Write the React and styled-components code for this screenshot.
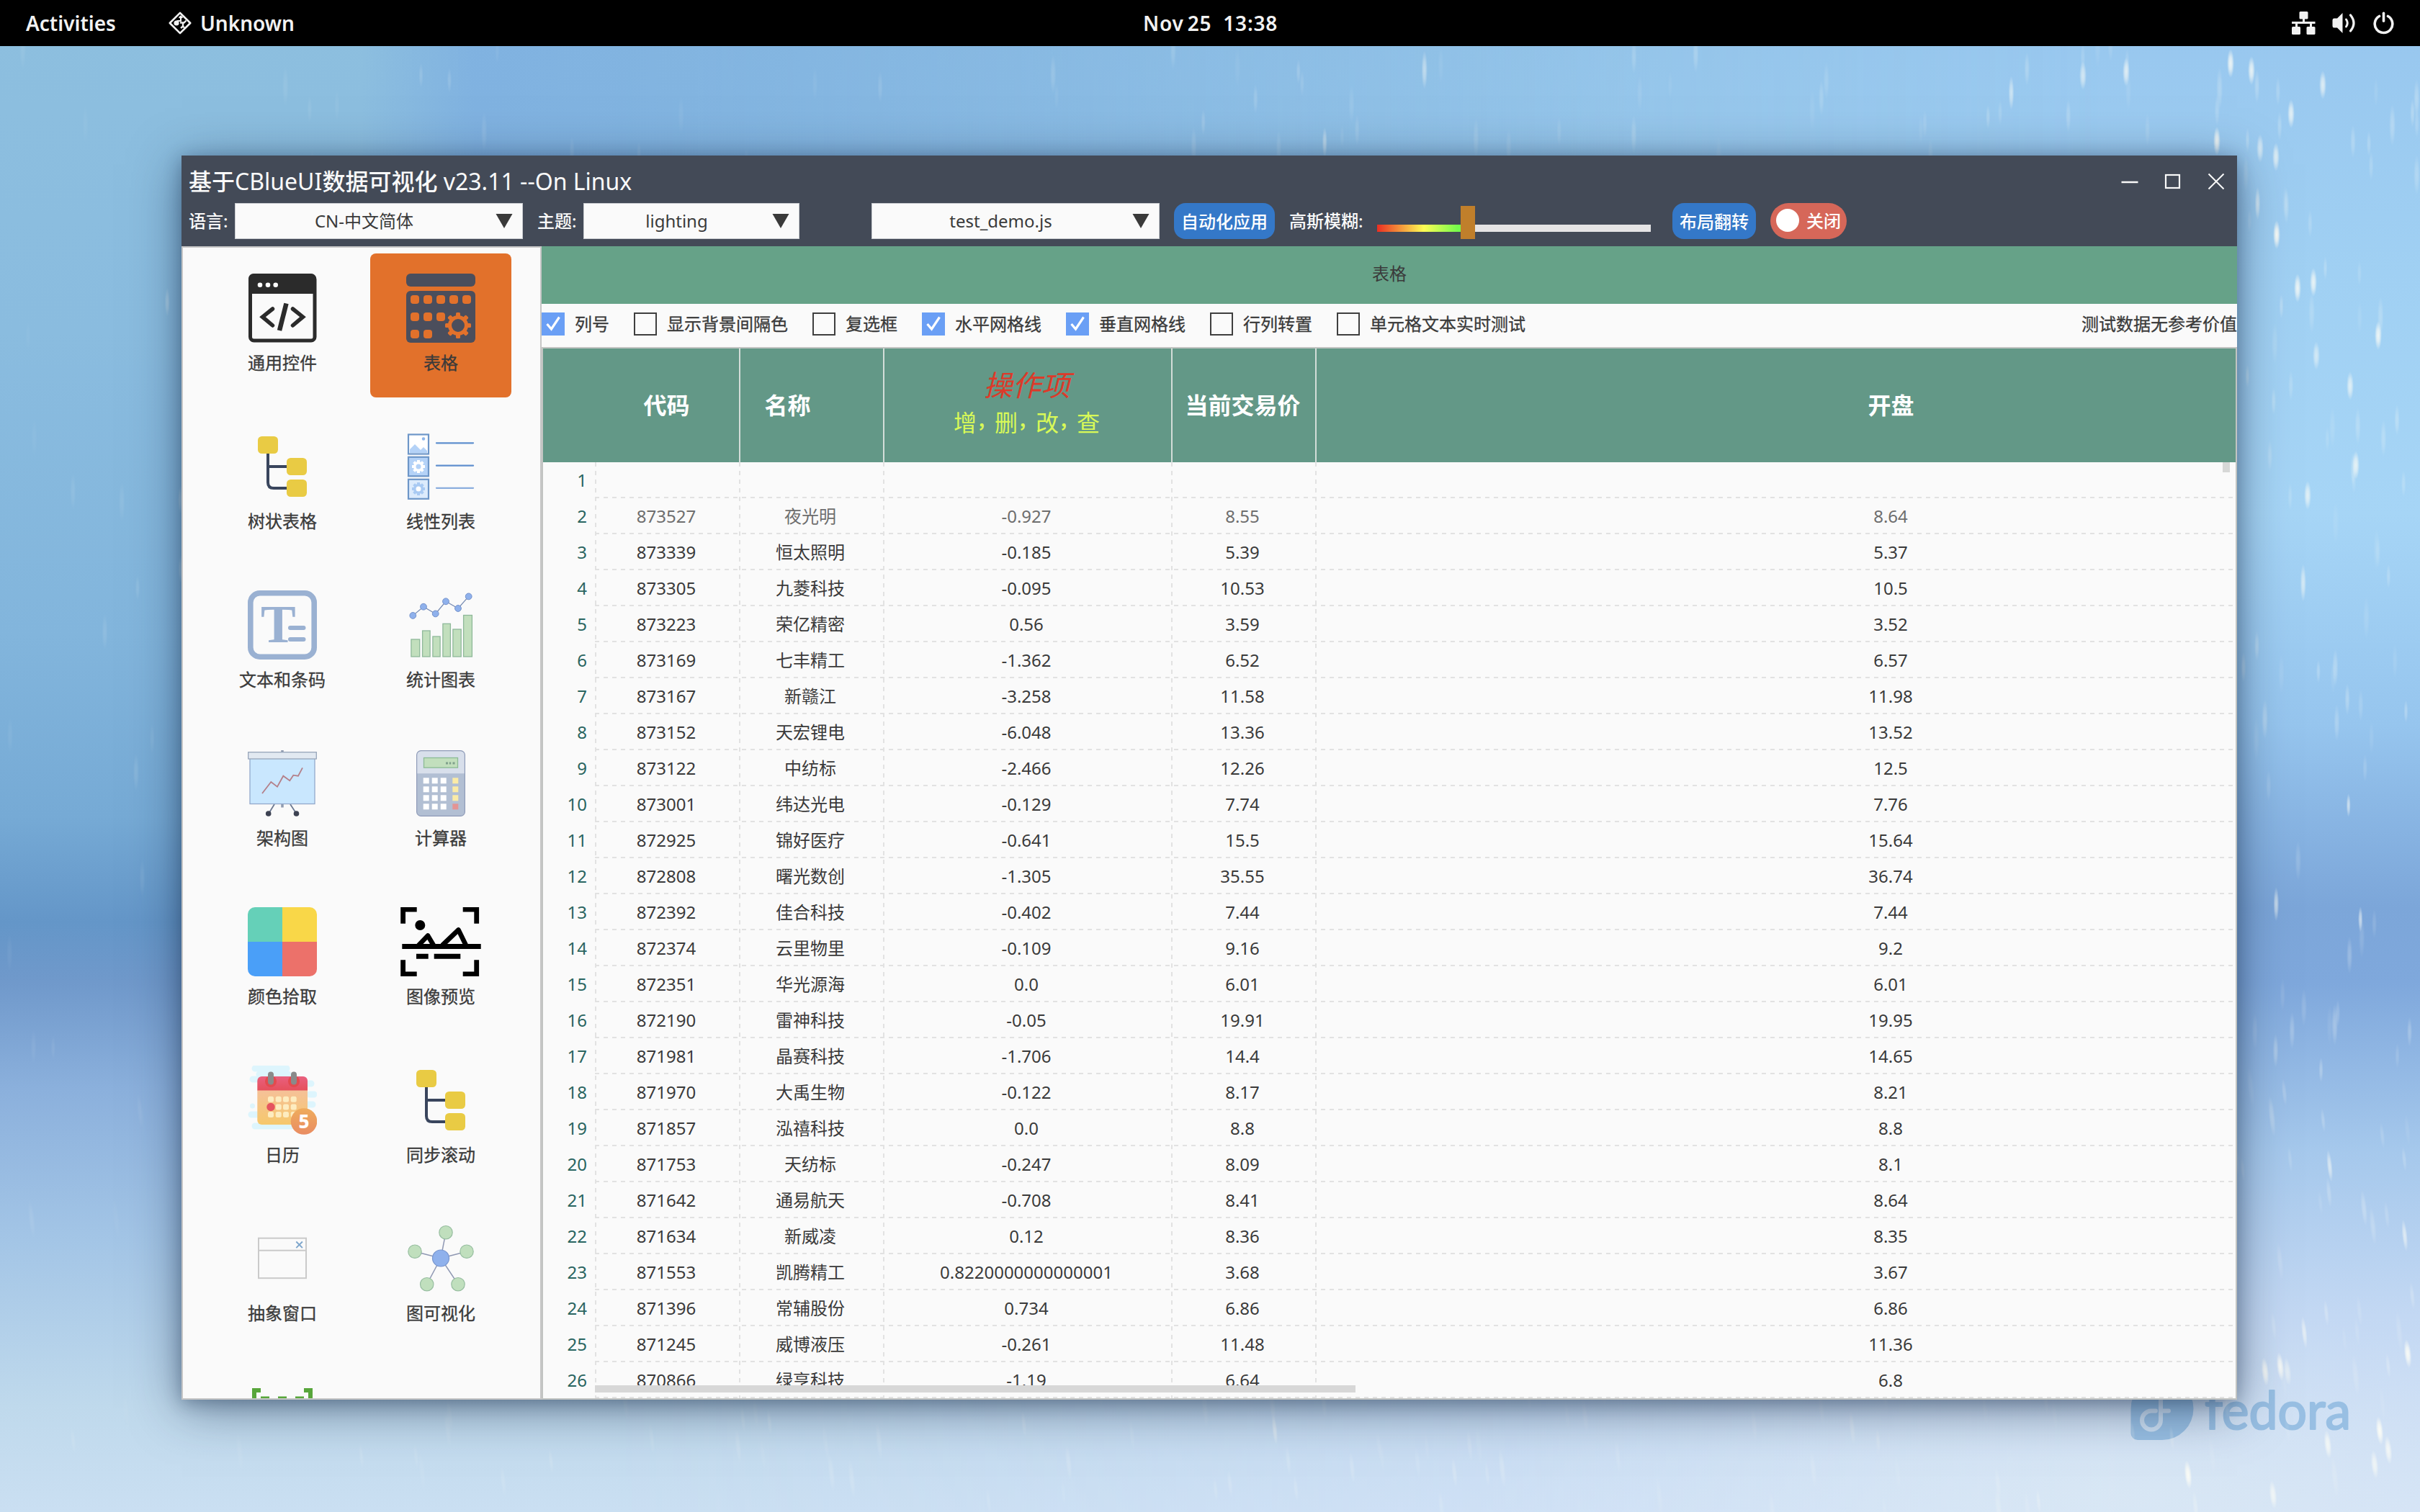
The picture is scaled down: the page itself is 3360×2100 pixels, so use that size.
import React from 'react';
import styled, { createGlobalStyle, css } from 'styled-components';

const GlobalStyle = createGlobalStyle`
  * { box-sizing: border-box; }
  html, body { margin: 0; padding: 0; }
  body {
    width: 3360px;
    height: 2100px;
    overflow: hidden;
    font-family: "Noto Sans", "Noto Sans CJK SC", sans-serif;
    font-size: 24px;
    color: #3a3a3a;
  }
  svg { display: block; }
`;

/* ---------- desktop ---------- */

const Desktop = styled.div`
  position: relative;
  width: 3360px;
  height: 2100px;
  overflow: hidden;
  background: linear-gradient(
    to bottom,
    #8dbfdf 0%, #8abcdf 22%, #82b5dc 42%, #76aad5 54%, #6496c8 61%,
    #7099cb 65%, #8bb0dc 72%, #a3c5e6 82%, #bfd9ec 93%, #cadff2 100%
  );
`;

const WallpaperRight = styled.div`
  position: absolute;
  inset: 0;
  background: linear-gradient(
    to bottom,
    #97c6ee 0%, #a0d0f3 18%, #a6d5f6 34%, #96c5ee 48%, #7ca6d9 60%,
    #7fa8dc 65%, #a5c8ec 76%, #c3d8f3 87%, #d2e1f7 100%
  );
  mask-image: linear-gradient(to right, transparent 25%, #000 88%);
`;

const WallpaperGlow = styled.div`
  position: absolute;
  inset: 0;
  background:
    linear-gradient(to right, transparent 500px, rgba(124, 174, 225, 0.75) 660px, transparent 2300px) 0 0 / 100% 640px no-repeat,
    radial-gradient(ellipse 900px 260px at 2950px 2080px, rgba(221, 235, 243, 0.6), transparent);
`;

const SnowLayer = styled.svg`
  position: absolute;
  inset: 0;
`;

const FedoraMark = styled.svg`
  position: absolute;
  left: 2958px;
  top: 1912px;
`;

const TopBar = styled.header`
  position: relative;
  display: grid;
  grid-template-columns: 1fr auto 1fr;
  align-items: center;
  height: 64px;
  padding: 0 36px;
  background: #000;
  color: #f2f2f2;
  font-size: 28px;
  font-weight: 600;
  line-height: 61px;
`;

const TopBarLeft = styled.div`
  display: flex;
  align-items: center;
`;

const AppMenu = styled.div`
  display: flex;
  align-items: center;
  gap: 12px;
  margin-left: 73px;
`;

const TopBarRight = styled.div`
  display: flex;
  align-items: center;
  justify-content: flex-end;
  gap: 23px;
`;

const Clock = styled.div`
  display: flex;
  gap: 16px;
  padding-left: 1px;
  letter-spacing: 0.8px;
  word-spacing: -3px;
`;

/* ---------- window ---------- */

const Window = styled.main`
  position: absolute;
  left: 252px;
  top: 216px;
  width: 2854px;
  height: 1728px;
  display: flex;
  flex-direction: column;
  background: #fafafa;
  box-shadow: 0 12px 64px rgba(20, 40, 70, 0.5), 0 4px 22px rgba(20, 40, 70, 0.32);
`;

const WindowHeader = styled.div`
  flex: none;
  height: 126px;
  background: #434a57;
  color: #fafafa;
`;

const TitleRow = styled.div`
  display: flex;
  align-items: center;
  justify-content: space-between;
  height: 66px;
  padding: 6px 17px 0 10px;
  font-size: 32px;
  line-height: 60px;
`;

const Hanzi = styled.span`
  font-weight: 500;
`;

const WindowButtons = styled.div`
  display: flex;
  gap: 36px;
`;

const ToolRow = styled.div`
  display: flex;
  align-items: center;
  height: 50px;
  padding-left: 10px;
  line-height: 48px;
`;

const ToolLabel = styled.span`
  flex: none;
  width: ${(p) => p.$width}px;
  font-weight: 500;
  white-space: nowrap;
`;

const SelectBox = styled.div`
  display: grid;
  grid-template-columns: 1fr 37px;
  align-items: center;
  width: ${(p) => p.$width}px;
  height: 50px;
  margin-right: ${(p) => p.$after}px;
  border: 1px solid #c9ccd0;
  background: #fafafa;
  color: #3a3a3a;
  text-align: center;
  line-height: 46px;
`;

const SelectValue = styled.span`
  padding-right: 4px;
`;

const PillButton = styled.button`
  width: ${(p) => p.$width}px;
  height: 50px;
  margin: 0 20px 0 0;
  padding: 0;
  border: 0;
  border-radius: 16px;
  background: #3478c8;
  color: #fff;
  font: inherit;
  font-weight: 500;
  line-height: 47px;
`;

const SliderTrack = styled.div`
  display: flex;
  align-items: flex-end;
  width: 380px;
  height: 50px;
  margin-right: 30px;
`;

const SliderFill = styled.div`
  width: 116px;
  height: 10px;
  margin-bottom: 10px;
  background: linear-gradient(to right, #ea2e22, #fdfd54 56%, #76fa4c 96%);
`;

const SliderThumb = styled.div`
  width: 20px;
  height: 46px;
  background: #c07f2b;
`;

const SliderRest = styled.div`
  flex: 1;
  height: 10px;
  margin-bottom: 10px;
  background: #e5e4e5;
`;

const Toggle = styled.div`
  display: flex;
  align-items: flex-start;
  gap: 10px;
  width: 106px;
  height: 50px;
  padding: 8px;
  border-radius: 25px;
  background: #d66759;
  color: #fff;
  font-weight: 500;
  line-height: 34px;
`;

const ToggleKnob = styled.div`
  width: 32px;
  height: 32px;
  border-radius: 50%;
  background: #fff;
`;

const WindowBody = styled.div`
  flex: 1;
  display: flex;
  min-height: 0;
`;

/* ---------- side bar ---------- */

const Sidebar = styled.nav`
  flex: none;
  display: grid;
  grid-template-columns: 196px 196px;
  grid-auto-rows: 200px;
  gap: 20px 24px;
  width: 500px;
  padding: 8px 0 0 40px;
  border: 2px solid #c6c6c6;
  overflow: hidden;
  background: #fafafa;
  -webkit-text-stroke: 0.3px currentColor;
`;

const SideItem = styled.div`
  display: flex;
  flex-direction: column;
  align-items: center;
  padding-top: 28px;
  border-radius: 8px;
  background: ${(p) => (p.$active ? '#e2712b' : 'transparent')};
  line-height: 36px;
  white-space: nowrap;
`;

const SideLabel = styled.span`
  margin-top: 10px;
`;

/* ---------- content ---------- */

const Content = styled.section`
  flex: 1;
  display: flex;
  flex-direction: column;
  min-width: 0;
`;

const Banner = styled.div`
  flex: none;
  height: 80px;
  background: #66a288;
  text-align: center;
  line-height: 76px;
`;

const OptionBar = styled.div`
  flex: none;
  display: flex;
  align-items: center;
  height: 60px;
  padding-bottom: 4px;
  line-height: 56px;
  white-space: nowrap;
  -webkit-text-stroke: 0.3px currentColor;
`;

const Option = styled.label`
  display: flex;
  align-items: center;
  gap: 14px;
  margin-right: 34px;
`;

const CheckMark = styled.span`
  width: 32px;
  height: 32px;
  border: 2px solid ${(p) => (p.$on ? '#6a9ff5' : '#3f3f3f')};
  background: ${(p) => (p.$on ? '#6a9ff5' : 'transparent')};
`;

const OptionNote = styled.span`
  margin-left: auto;
`;

const TablePanel = styled.div`
  flex: 1;
  position: relative;
  display: flex;
  flex-direction: column;
  min-height: 0;
  overflow: hidden;
  border: 2px solid #c2c4c2;
  background: #fafafa;
`;

const columns = css`
  display: grid;
  grid-template-columns: 72px 200px 200px 400px 200px 1600px;
`;

const HeadRow = styled.div`
  ${columns}
  flex: none;
  width: 2672px;
  height: 158px;
  background: #639887;
  color: #fff;
  font-size: 32px;
  font-weight: 700;
`;

const HeadCell = styled.div`
  display: flex;
  flex-direction: column;
  align-items: center;
  justify-content: center;
  padding-right: ${(p) => (p.$trail || 0) + (p.$line ? 3 : 1)}px;
  padding-bottom: 5px;
  border-left: ${(p) => (p.$line ? '2px solid #d3ddd8' : '0')};
`;

const HeadAccent = styled.span`
  color: #dc3a2a;
  font-size: 40px;
  font-style: italic;
  font-weight: 400;
  line-height: 52px;
`;

const HeadActions = styled.span`
  display: flex;
  color: #d8f957;
  font-weight: 400;
  line-height: 52px;
`;

const Comma = styled.span`
  width: 25px;
  font-size: 25px;
  font-weight: 700;
  line-height: 46px;
`;

const dashedRight = (color) => `repeating-linear-gradient(to right, ${color} 0 6px, transparent 6px 12px)`;
const dashedDown = `repeating-linear-gradient(to bottom, #e2e2e2 0 6px, transparent 6px 12px)`;

const BodyRows = styled.div`
  flex: none;
  width: 2672px;
  background-image: ${Array(5).fill(dashedDown).join(', ')};
  background-size: 2px 100%;
  background-repeat: no-repeat;
  background-position: 72px 0, 272px 0, 472px 0, 872px 0, 1072px 0;
`;

const Row = styled.div`
  ${columns}
  height: 50px;
  line-height: 50px;
  text-align: center;
  color: ${(p) => (p.$dim ? '#6e6e6e' : '#3a3a3a')};
  background: ${dashedRight('#e2e2e2')} 72px 48px / 100% 2px no-repeat;
`;

const IndexCell = styled.div`
  padding-right: 11px;
  text-align: right;
  color: #2a6560;
`;

const Cell = styled.div`
  padding-right: 2px;
  white-space: nowrap;
`;

const VScroll = styled.div`
  position: absolute;
  right: 8px;
  top: 158px;
  width: 10px;
  height: 14px;
  background: #d7d8d7;
`;

const HScroll = styled.div`
  position: absolute;
  left: 72px;
  bottom: 8px;
  width: 1056px;
  height: 10px;
  background: #d7d7d7;
`;

/* ---------- wallpaper snow ---------- */

function makeFlakes() {
  let seed = 20231125;
  const rand = () => {
    seed = (seed * 1664525 + 1013904223) % 4294967296;
    return seed / 4294967296;
  };
  const flakes = [];
  for (let i = 0; i < 1500; i += 1) {
    const x = rand() * 3360;
    const y = 60 + rand() * 2040;
    const keep = rand() < 0.25 + 0.75 * (x / 3360);
    const bright = rand();
    const size = rand();
    if (keep) {
      flakes.push({
        x,
        y,
        rx: 3 + size * 1.6,
        ry: 16 + size * 14,
        o: (bright > 0.93 ? 0.6 : 0.08 + bright * 0.22) * (0.4 + 0.6 * (x / 3360)),
      });
    }
  }
  const marked = [
    [2892, 105, 0.6], [2952, 100, 0.7], [3097, 88, 0.85], [3126, 98, 0.8], [3225, 118, 0.7], [3181, 158, 0.75],
    [3078, 196, 0.9], [3138, 206, 0.6], [3160, 218, 0.7], [3161, 326, 1], [3190, 400, 0.85], [3212, 392, 0.8],
    [3302, 466, 0.85], [3263, 536, 0.7], [3271, 646, 0.75], [3216, 494, 0.55], [3204, 688, 0.7], [3145, 1905, 0.85],
    [3166, 1898, 0.9], [3343, 1880, 0.95], [3316, 2014, 0.8], [3304, 1987, 1], [3038, 2048, 1], [3232, 2006, 0.8],
    [3297, 2034, 0.7], [3156, 2076, 0.7], [3176, 1905, 0.5],
  ];
  marked.forEach(([x, y, o]) => flakes.push({ x, y, rx: 5, ry: 20, o }));
  return flakes;
}

const flakes = makeFlakes();

const Snow = () => (
  <SnowLayer width="3360" height="2100" viewBox="0 0 3360 2100">
    <defs>
      <radialGradient id="flake">
        <stop offset="0" stopColor="#fbfcf6" />
        <stop offset="0.45" stopColor="#fbfcf6" stopOpacity="0.75" />
        <stop offset="1" stopColor="#fbfcf6" stopOpacity="0" />
      </radialGradient>
    </defs>
    {flakes.map((f, i) => (
      <ellipse
        key={i}
        cx={f.x}
        cy={f.y}
        rx={f.rx}
        ry={f.ry}
        fill="url(#flake)"
        opacity={f.o}
        transform={`rotate(${f.y > 1500 ? -6 : 0} ${f.x} ${f.y})`}
      />
    ))}
  </SnowLayer>
);

const Fedora = () => (
  <FedoraMark width="320" height="100" viewBox="0 0 320 100">
    <path d="M44 1a43.500 43.500 0 0 1 0 87H10a9.500 9.500 0 0 1-9.500-9.500V44.500A43.500 43.500 0 0 1 44 1z" fill="#98bfe3" />
    <path
      d="M35 47.500H29a13 13 0 1 0 13 13V32a12 12 0 0 1 12-12h7M42 47.500h11"
      fill="none"
      stroke="#ccdff2"
      strokeWidth="6"
      strokeLinecap="round"
    />
    <text
      x="103"
      y="73"
      fill="#98bfe3"
      stroke="#98bfe3"
      strokeWidth="2.200"
      strokeLinejoin="round"
      fontFamily="Lato, sans-serif"
      fontSize="73"
      textLength="203"
      lengthAdjust="spacingAndGlyphs"
    >
      fedora
    </text>
  </FedoraMark>
);

/* ---------- icons ---------- */

const Icon = ({ width = 96, children }) => (
  <svg width={width} height="96" viewBox={`0 0 ${width} 96`} fill="none">
    {children}
  </svg>
);

const CodeIcon = () => (
  <Icon>
    <rect x="3.500" y="3" width="89.500" height="90" rx="5" stroke="#2b2b2b" strokeWidth="5" />
    <path d="M1 28V7a7 7 0 0 1 7-7h80a7 7 0 0 1 7 7v21z" fill="#2b2b2b" />
    <circle cx="17" cy="15.700" r="3.300" fill="#fff" />
    <circle cx="28" cy="15.700" r="3.300" fill="#fff" />
    <circle cx="38.700" cy="15.700" r="3.300" fill="#fff" />
    <path d="M34.500 49 20.500 60.200 34.500 72M62.500 49l14 11.200L62.500 72" stroke="#2b2b2b" strokeWidth="5.500" strokeLinecap="round" />
    <path d="M53.500 41.500 44 79" stroke="#2b2b2b" strokeWidth="6.500" />
  </Icon>
);

const gridDots = [
  [6, 30], [24, 30], [42, 30], [60, 30], [78, 30],
  [6, 54], [24, 54], [42, 54],
  [6, 78], [24, 78],
];

const TableIcon = () => (
  <Icon>
    <rect width="96" height="18" rx="6" fill="#4b4e5c" />
    <rect y="24" width="96" height="72" rx="6" fill="#4b4e5c" />
    {gridDots.map(([x, y]) => (
      <rect key={`${x}-${y}`} x={x} y={y} width="12" height="12" rx="4" fill="#e2712b" />
    ))}
    <circle cx="72" cy="72" r="11.500" stroke="#e2712b" strokeWidth="5" />
    {[0, 45, 90, 135, 180, 225, 270, 315].map((a) => (
      <rect key={a} x="69" y="54" width="6" height="7" rx="1.500" fill="#e2712b" transform={`rotate(${a} 72 72)`} />
    ))}
  </Icon>
);

const TreeIcon = () => (
  <Icon>
    <path d="M28 28v42q0 8 8 8h20M28 48h28" stroke="#39455d" strokeWidth="4" />
    <rect x="14" y="6" width="28" height="24" rx="5.500" fill="#e9cb44" />
    <rect x="54" y="36" width="28" height="24" rx="5.500" fill="#e9cb44" />
    <rect x="54" y="66" width="28" height="24" rx="5.500" fill="#e9cb44" />
  </Icon>
);

const Petals = ({ cx, cy, fill }) => (
  <g fill={fill}>
    {[0, 45, 90, 135, 180, 225, 270, 315].map((a) => (
      <rect key={a} x={cx - 2} y={cy - 9} width="4" height="5" transform={`rotate(${a} ${cx} ${cy})`} />
    ))}
    <circle cx={cx} cy={cy} r="7" />
  </g>
);

const ListIcon = () => (
  <Icon>
    <rect x="3" y="3.500" width="28" height="27" fill="#fff" stroke="#6d96c8" strokeWidth="2.200" />
    <path d="M5 29v-5l7-7 8 8 4-4 5 5v3z" fill="#b4d2f7" />
    <circle cx="24" cy="9.500" r="2.200" fill="#8eb6ea" />
    <rect x="3" y="34.800" width="28" height="26.500" fill="#b4d2f7" stroke="#6d96c8" strokeWidth="2.200" />
    <Petals cx={17} cy={48} fill="#fff" />
    <circle cx="17" cy="48" r="3.500" fill="#b4d2f7" />
    <rect x="3" y="65.800" width="28" height="27" fill="#dcebfc" stroke="#6d96c8" strokeWidth="2.200" />
    <Petals cx={17} cy={79} fill="#a9caf3" />
    <circle cx="17" cy="79" r="3.500" fill="#fff" />
    <path d="M42 15.300h51M42 46.700h51" stroke="#5f8fce" strokeWidth="2.300" strokeLinecap="round" />
    <path d="M42 77.800h51" stroke="#8aadde" strokeWidth="2.300" strokeLinecap="round" />
  </Icon>
);

const TextIcon = () => (
  <Icon>
    <rect x="3.800" y="3.800" width="88.400" height="88.400" rx="13" stroke="#9ab1d2" strokeWidth="7.600" />
    <text x="18" y="72" fill="#9ab1d2" fontFamily="'Liberation Serif', serif" fontWeight="700" fontSize="73">T</text>
    <path d="M59 52h18.500M59 68h18.500" stroke="#9ab1d2" strokeWidth="6" strokeLinecap="round" />
  </Icon>
);

const chartPoints = [[9.3, 34.9], [24, 22.7], [40.7, 32.4], [55, 15.3], [72, 25], [86.7, 8.4]];
const chartBars = [[6.3, 13, 68], [22, 11.7, 56], [36.3, 11.4, 64], [50.3, 11.7, 46.3], [64.3, 12.5, 54], [79, 13, 34.5]];

const ChartIcon = () => (
  <Icon>
    {chartBars.map(([x, w, y]) => (
      <rect key={x} x={x + 0.6} y={y} width={w - 1.2} height={92 - y} fill="#c2dfbd" stroke="#8fb99a" strokeWidth="1.300" />
    ))}
    <polyline points={chartPoints.map((p) => p.join(',')).join(' ')} stroke="#7388b0" strokeWidth="1.200" />
    {chartPoints.map(([x, y]) => (
      <circle key={x} cx={x} cy={y} r="4.400" fill="#8fb1ec" stroke="#7391cb" strokeWidth="1" />
    ))}
  </Icon>
);

const BoardIcon = () => (
  <Icon>
    <path d="M48 2v4M48 77v4.500" stroke="#8f9bb0" strokeWidth="3.500" />
    <path d="M37 77 29 90M59 77l8.500 13" stroke="#6d7a92" strokeWidth="1.800" />
    <rect x="3" y="12" width="90" height="64.500" fill="#c9e7fe" stroke="#93a9cb" strokeWidth="1.300" />
    <rect x="0.700" y="4.700" width="94.600" height="9.300" fill="#e2e9f1" stroke="#97a5b9" strokeWidth="1.300" />
    <polyline points="20,62 32.300,46 41,52.700 49.300,37.700 58.300,44.300 63.300,36.700 70,37.700 76,26.300" stroke="#b4808a" strokeWidth="1.800" />
    <circle cx="28.700" cy="90" r="3.800" fill="#3d4252" />
    <circle cx="67.500" cy="90" r="3.800" fill="#3d4252" />
  </Icon>
);

const CalcIcon = () => (
  <Icon>
    <rect x="14.600" y="2.600" width="66.800" height="90.800" rx="6" fill="#b2bfd3" />
    <path d="M14.600 34.300V8.600a6 6 0 0 1 6-6h54.800a6 6 0 0 1 6 6v25.700z" fill="#d8dfeb" />
    <rect x="14.600" y="2.600" width="66.800" height="90.800" rx="6" stroke="#8f9bb8" strokeWidth="1.200" />
    <rect x="24.500" y="12.500" width="47" height="13.700" fill="#c2dfbd" stroke="#8cbb96" strokeWidth="1.300" />
    <path d="M55 20h3M59.800 20h2.400M64.500 20h3" stroke="#7fa08c" strokeWidth="3" />
    {[40.3, 52.3, 64.3, 76.3].map((y, i) => (
      <g key={y} fill="#fff">
        <rect x="23.700" y={y} width="8" height="8" />
        <rect x="35.700" y={y} width="8" height="8" />
        <rect x="47.700" y={y} width="8" height="8" />
        <rect x="64.300" y={y} width="8" height="8" fill={i === 3 ? '#e39494' : '#fbeba6'} />
      </g>
    ))}
  </Icon>
);

const ColorIcon = () => (
  <Icon>
    <path d="M0 48V10A10 10 0 0 1 10 0h38v48z" fill="#65d0b8" />
    <path d="M48 0h38a10 10 0 0 1 10 10v38H48z" fill="#f9d748" />
    <path d="M0 48h48v48H10A10 10 0 0 1 0 86z" fill="#4a9ff8" />
    <path d="M48 48h48v38a10 10 0 0 1-10 10H48z" fill="#ec716a" />
  </Icon>
);

const ScanIcon = () => (
  <Icon width={112}>
    <path
      d="M3.600 22.700V3.200H22.700M86.700 3.200h19v19.500M3.600 73.300v19.500H22.700M86.700 92.800h19V73.300"
      stroke="#000"
      strokeWidth="6.800"
    />
    <circle cx="27.300" cy="25" r="7" fill="#000" />
    <path d="M25 53 38 39.500 46 53M58 53 80.500 31.500 91 53" stroke="#000" strokeWidth="6.600" strokeLinejoin="round" />
    <path d="M2.300 54.500h109.400M22 68.200h16.700M46.700 68.200h36.600" stroke="#000" strokeWidth="7" />
  </Icon>
);

const CalendarIcon = () => (
  <Icon>
    <defs>
      <linearGradient id="calHead" x1="0" y1="0" x2="0" y2="1">
        <stop offset="0" stopColor="#e9607f" />
        <stop offset="1" stopColor="#e5505c" />
      </linearGradient>
      <linearGradient id="calBody" x1="0" y1="0" x2="0" y2="1">
        <stop offset="0" stopColor="#f5c199" />
        <stop offset="1" stopColor="#f6c86c" />
      </linearGradient>
      <linearGradient id="calBadge" x1="0" y1="0" x2="0" y2="1">
        <stop offset="0" stopColor="#efac5c" />
        <stop offset="1" stopColor="#e98c62" />
      </linearGradient>
    </defs>
    <g stroke="#ddf5fd" strokeLinecap="round">
      <path d="M10 4h44M10 84h50M7 19h40M86 40h6" strokeWidth="9" />
      <path d="M5 68h40M70 25h18M80 54h10M16 12h40" strokeWidth="9" />
      <path d="M6.500 56h0" strokeWidth="7" />
    </g>
    <path d="M13.300 34h69.700v42a6 6 0 0 1-6 6H19.300a6 6 0 0 1-6-6z" fill="url(#calBody)" />
    <path d="M13.300 34.400V21a6 6 0 0 1 6-6H77a6 6 0 0 1 6 6v13.400z" fill="url(#calHead)" />
    <circle cx="32" cy="22" r="8" fill="#e34a4e" />
    <circle cx="64" cy="22" r="8" fill="#e34a4e" />
    <path d="M32 12.500v10M64 12.500v10" stroke="#8a8a8a" strokeWidth="8" strokeLinecap="round" />
    {[46.8, 57.5, 68].map((y) =>
      [32, 42.7, 53, 63.7].map((x) => (
        <rect key={`${x}-${y}`} x={x - 4} y={y - 4} width="8" height="8" rx="2.500" fill="#fdecc0" />
      ))
    )}
    <circle cx="32" cy="57.500" r="5.700" fill="#e5545f" />
    <circle cx="78" cy="77.500" r="18.300" fill="url(#calBadge)" />
    <text x="78" y="87" fill="#fff" textAnchor="middle" fontFamily="'Noto Sans', sans-serif" fontWeight="800" fontSize="26">5</text>
  </Icon>
);

const WindowIcon = () => (
  <Icon>
    <rect x="15" y="19.700" width="66" height="55.500" stroke="#cacaca" strokeWidth="2" />
    <path d="M15 36.800h66" stroke="#cacaca" strokeWidth="2" />
    <path d="m67.300 24.500 8.600 8.600M75.900 24.500l-8.600 8.600" stroke="#7ea6cc" strokeWidth="1.900" />
  </Icon>
);

const graphNodes = [[55, 11.7], [12, 38.2], [84, 38.2], [28.7, 83.7], [72, 83.7]];

const GraphIcon = () => (
  <Icon>
    {graphNodes.map(([x, y]) => (
      <path key={x} d={`M48 47.500 ${x} ${y}`} stroke="#8f98b3" strokeWidth="1.500" />
    ))}
    {graphNodes.map(([x, y]) => (
      <circle key={x} cx={x} cy={y} r="9.200" fill="#c0dfbd" stroke="#97bea0" strokeWidth="1.200" />
    ))}
    <circle cx="48" cy="47.500" r="11.500" fill="#8fb1ec" stroke="#7896cf" strokeWidth="1.200" />
  </Icon>
);

const ScanGreenIcon = () => (
  <Icon>
    <path d="M9 34V11h9M87 34V11h-9" stroke="#58a63b" strokeWidth="6" />
    <path d="M18 21h12M42 21h12M66 21h12" stroke="#58a63b" strokeWidth="3" />
  </Icon>
);

const UnknownIcon = () => (
  <svg width="32" height="32" viewBox="0 0 32 32" fill="none">
    <path d="M16 1.800 30.200 16 16 30.200 1.800 16z" stroke="#f2f2f2" strokeWidth="2.600" strokeLinejoin="round" />
    <path d="M17 6.500v6.500h-5.500M14.500 8.800 17 6.500l2.500 2.300" stroke="#f2f2f2" strokeWidth="2" />
    <circle cx="11" cy="16" r="3.600" fill="#f2f2f2" />
    <path d="M16 15.500h5.500l3-3M20 15.500v5.500M17 23l3-2.500 2 2" stroke="#f2f2f2" strokeWidth="2.400" />
  </svg>
);

const NetworkIcon = () => (
  <svg width="33" height="32" viewBox="0 0 33 32" fill="#f2f2f2">
    <rect x="10.500" y="0" width="12" height="10.500" rx="1.500" />
    <rect x="0" y="21" width="12" height="11" rx="1.500" />
    <rect x="20.500" y="21" width="12" height="11" rx="1.500" />
    <path d="M15 10h3v4h14.500v3H28v5h-3v-5H8v5H5v-5H0v-3h15z" />
  </svg>
);

const VolumeIcon = () => (
  <svg width="34" height="32" viewBox="0 0 34 32" fill="none" stroke="#f2f2f2" strokeLinecap="round">
    <path d="M2.500 9.500H7L14.500 2v28L7 22.500H2.500Q0.500 22.500 0.500 20v-8q0-2.500 2-2.500z" fill="#f2f2f2" stroke="none" />
    <path d="M19.500 11q3.500 5 0 10" strokeWidth="3" />
    <path d="M25.500 5q9 11 0 22" strokeWidth="3.200" />
  </svg>
);

const PowerIcon = () => (
  <svg width="29" height="32" viewBox="0 0 29 32" fill="none" stroke="#f2f2f2" strokeWidth="3.600" strokeLinecap="round">
    <path d="M8.500 6.500a12.300 12.300 0 1 0 12 0" />
    <path d="M14.500 2.300v11" />
  </svg>
);

const Arrow = () => (
  <svg width="24" height="20" viewBox="0 0 24 20">
    <path d="M0.500 0h23L12 20z" fill="#3a3a3a" />
  </svg>
);

const Tick = () => (
  <svg width="28" height="28" viewBox="0 0 28 28" fill="none">
    <path d="M5.500 14 11.500 21 22.500 4.500" stroke="#fff" strokeWidth="3.200" />
  </svg>
);

/* ---------- data ---------- */

const sideItems = [
  ['通用控件', CodeIcon], ['表格', TableIcon],
  ['树状表格', TreeIcon], ['线性列表', ListIcon],
  ['文本和条码', TextIcon], ['统计图表', ChartIcon],
  ['架构图', BoardIcon], ['计算器', CalcIcon],
  ['颜色拾取', ColorIcon], ['图像预览', ScanIcon],
  ['日历', CalendarIcon], ['同步滚动', TreeIcon],
  ['抽象窗口', WindowIcon], ['图可视化', GraphIcon],
  ['', ScanGreenIcon],
];

const options = [
  ['列号', true], ['显示背景间隔色', false], ['复选框', false], ['水平网格线', true],
  ['垂直网格线', true], ['行列转置', false], ['单元格文本实时测试', false],
];

const rows = [
  ['', '', '', '', ''],
  ['873527', '夜光明', '-0.927', '8.55', '8.64'],
  ['873339', '恒太照明', '-0.185', '5.39', '5.37'],
  ['873305', '九菱科技', '-0.095', '10.53', '10.5'],
  ['873223', '荣亿精密', '0.56', '3.59', '3.52'],
  ['873169', '七丰精工', '-1.362', '6.52', '6.57'],
  ['873167', '新赣江', '-3.258', '11.58', '11.98'],
  ['873152', '天宏锂电', '-6.048', '13.36', '13.52'],
  ['873122', '中纺标', '-2.466', '12.26', '12.5'],
  ['873001', '纬达光电', '-0.129', '7.74', '7.76'],
  ['872925', '锦好医疗', '-0.641', '15.5', '15.64'],
  ['872808', '曙光数创', '-1.305', '35.55', '36.74'],
  ['872392', '佳合科技', '-0.402', '7.44', '7.44'],
  ['872374', '云里物里', '-0.109', '9.16', '9.2'],
  ['872351', '华光源海', '0.0', '6.01', '6.01'],
  ['872190', '雷神科技', '-0.05', '19.91', '19.95'],
  ['871981', '晶赛科技', '-1.706', '14.4', '14.65'],
  ['871970', '大禹生物', '-0.122', '8.17', '8.21'],
  ['871857', '泓禧科技', '0.0', '8.8', '8.8'],
  ['871753', '天纺标', '-0.247', '8.09', '8.1'],
  ['871642', '通易航天', '-0.708', '8.41', '8.64'],
  ['871634', '新威凌', '0.12', '8.36', '8.35'],
  ['871553', '凯腾精工', '0.8220000000000001', '3.68', '3.67'],
  ['871396', '常辅股份', '0.734', '6.86', '6.86'],
  ['871245', '威博液压', '-0.261', '11.48', '11.36'],
  ['870866', '绿亨科技', '-1.19', '6.64', '6.8'],
];

const Select = ({ value, width, after }) => (
  <SelectBox $width={width} $after={after}>
    <SelectValue>{value}</SelectValue>
    <Arrow />
  </SelectBox>
);

export default function App() {
  return (
    <Desktop>
      <GlobalStyle />
      <WallpaperRight />
      <WallpaperGlow />
      <Fedora />
      <Snow />
      <TopBar>
        <TopBarLeft>
          <span>Activities</span>
          <AppMenu>
            <UnknownIcon />
            <span>Unknown</span>
          </AppMenu>
        </TopBarLeft>
        <Clock>
          <span>Nov 25</span>
          <span>13:38</span>
        </Clock>
        <TopBarRight>
          <NetworkIcon />
          <VolumeIcon />
          <PowerIcon />
        </TopBarRight>
      </TopBar>

      <Window>
        <WindowHeader>
          <TitleRow>
            <span>
              <Hanzi>基于</Hanzi>CBlueUI<Hanzi>数据可视化</Hanzi> v23.11 --On Linux
            </span>
            <WindowButtons>
              <svg width="24" height="24" viewBox="0 0 24 24"><path d="M0.500 13h23" stroke="#fafafa" strokeWidth="2.500" /></svg>
              <svg width="24" height="24" viewBox="0 0 24 24"><rect x="2" y="3" width="19" height="18" fill="none" stroke="#fafafa" strokeWidth="2.200" /></svg>
              <svg width="24" height="24" viewBox="0 0 24 24"><path d="m1.500 1.500 21 21M22.500 1.500l-21 21" stroke="#fafafa" strokeWidth="2" /></svg>
            </WindowButtons>
          </TitleRow>
          <ToolRow>
            <ToolLabel $width={64}>语言:</ToolLabel>
            <Select value="CN-中文简体" width={400} after={20} />
            <ToolLabel $width={64}>主题:</ToolLabel>
            <Select value="lighting" width={300} after={100} />
            <Select value="test_demo.js" width={400} after={20} />
            <PillButton $width={140}>自动化应用</PillButton>
            <ToolLabel $width={122}>高斯模糊:</ToolLabel>
            <SliderTrack>
              <SliderFill />
              <SliderThumb />
              <SliderRest />
            </SliderTrack>
            <PillButton $width={116}>布局翻转</PillButton>
            <Toggle>
              <ToggleKnob />
              <span>关闭</span>
            </Toggle>
          </ToolRow>
        </WindowHeader>

        <WindowBody>
          <Sidebar>
            {sideItems.map(([label, Glyph]) => (
              <SideItem key={label} $active={label === '表格'}>
                <Glyph />
                <SideLabel>{label}</SideLabel>
              </SideItem>
            ))}
          </Sidebar>

          <Content>
            <Banner>表格</Banner>
            <OptionBar>
              {options.map(([label, on]) => (
                <Option key={label}>
                  <CheckMark $on={on}>{on && <Tick />}</CheckMark>
                  <span>{label}</span>
                </Option>
              ))}
              <OptionNote>测试数据无参考价值</OptionNote>
            </OptionBar>
            <TablePanel>
              <HeadRow>
                <HeadCell />
                <HeadCell>代码</HeadCell>
                <HeadCell $line $trail={64}>名称</HeadCell>
                <HeadCell $line>
                  <HeadAccent>操作项</HeadAccent>
                  <HeadActions>
                    增<Comma>，</Comma>删<Comma>，</Comma>改<Comma>，</Comma>查
                  </HeadActions>
                </HeadCell>
                <HeadCell $line>当前交易价</HeadCell>
                <HeadCell $line>开盘</HeadCell>
              </HeadRow>
              <BodyRows>
                {rows.map((cells, i) => (
                  <Row key={i} $dim={i === 1}>
                    <IndexCell>{i + 1}</IndexCell>
                    {cells.map((text, c) => (
                      <Cell key={c}>{text}</Cell>
                    ))}
                  </Row>
                ))}
              </BodyRows>
              <VScroll />
              <HScroll />
            </TablePanel>
          </Content>
        </WindowBody>
      </Window>
    </Desktop>
  );
}
